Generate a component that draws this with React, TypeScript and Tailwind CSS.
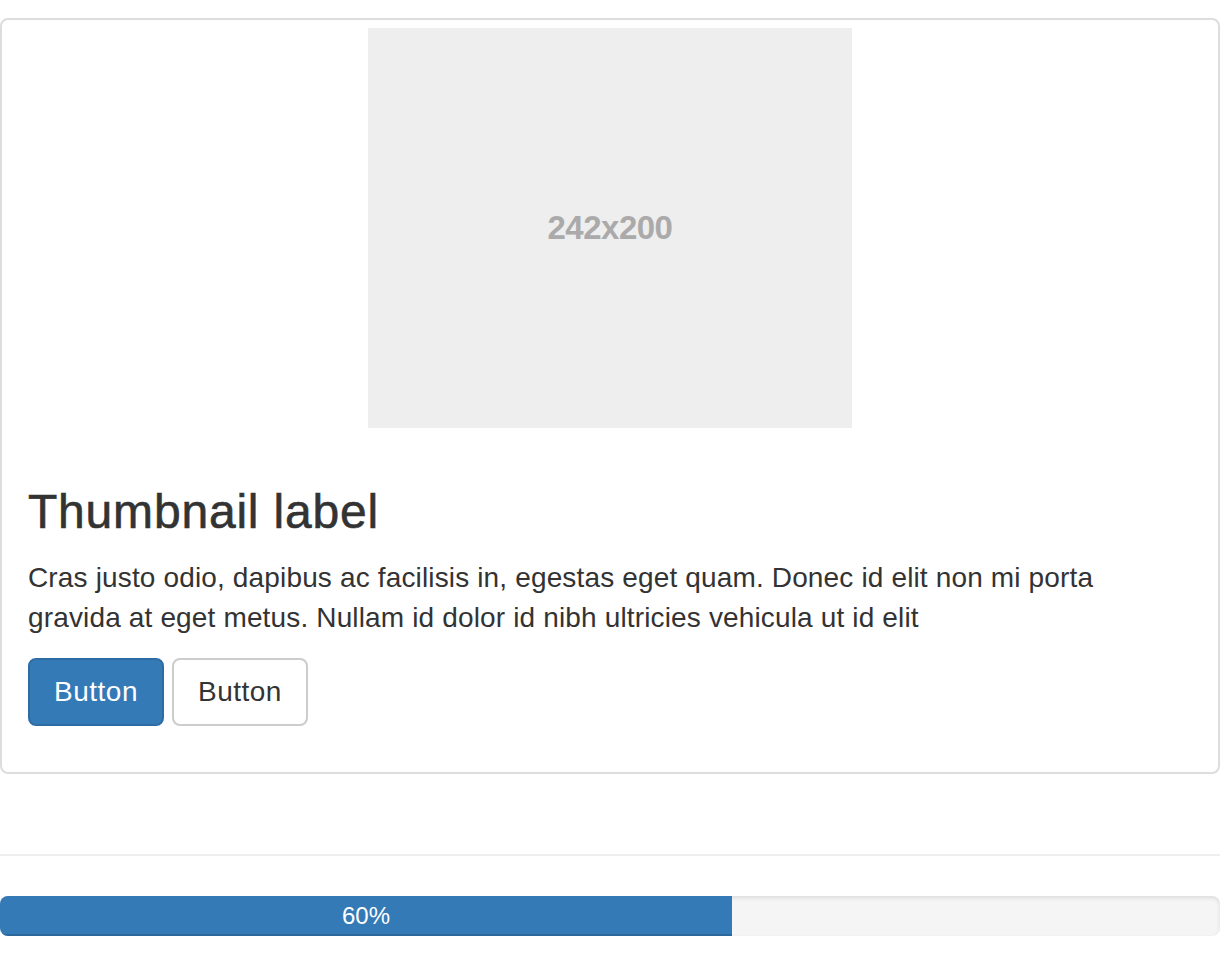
export default function App() {
  return (
    <div className="flex flex-col bg-white pt-[18px] text-[#333] [font-family:'Liberation_Sans',Arial,sans-serif]">
      <div className="mb-[40px] rounded-[8px] border-2 border-[#ddd] bg-white p-[8px]">
        <div className="mx-auto flex h-[400px] w-[484px] items-center justify-center bg-[#eee]">
          <span className="text-[33px] font-bold tracking-[-0.5px] text-[#aaa]">242x200</span>
        </div>
        <div className="p-[18px]">
          <h3 className="mt-[40px] mb-[20px] text-[48px] leading-[52px] font-normal tracking-[0.8px] [-webkit-text-stroke:0.6px_#333]">
            Thumbnail label
          </h3>
          <p className="mb-[20px] text-[28px] leading-[40px] tracking-[0.15px]">
            Cras justo odio, dapibus ac facilisis in, egestas eget quam. Donec id elit non mi porta
            <br />
            gravida at eget metus. Nullam id dolor id nibh ultricies vehicula ut id elit
          </p>
          <p className="mb-[20px] flex gap-[8px]">
            <button className="h-[68px] rounded-[8px] border-2 border-[#2e6da4] bg-[#337ab7] px-[24px] text-[28px] leading-[40px] tracking-[0.5px] text-white">
              Button
            </button>
            <button className="h-[68px] rounded-[8px] border-2 border-[#ccc] bg-white px-[24px] text-[28px] leading-[40px] tracking-[0.5px] text-[#333]">
              Button
            </button>
          </p>
        </div>
      </div>
      <hr className="my-[40px] border-0 border-t-2 border-[#eee]" />
      <div className="mb-[30px] flex h-[40px] overflow-hidden rounded-[8px] bg-[#f5f5f5] shadow-[inset_0_2px_4px_rgba(0,0,0,0.1)]">
        <div
          className="flex h-full items-center justify-center bg-[#337ab7] text-[24px] leading-[40px] text-white shadow-[inset_0_-2px_0_rgba(0,0,0,0.15)]"
          style={{ width: "60%" }}
        >
          60%
        </div>
      </div>
    </div>
  );
}
